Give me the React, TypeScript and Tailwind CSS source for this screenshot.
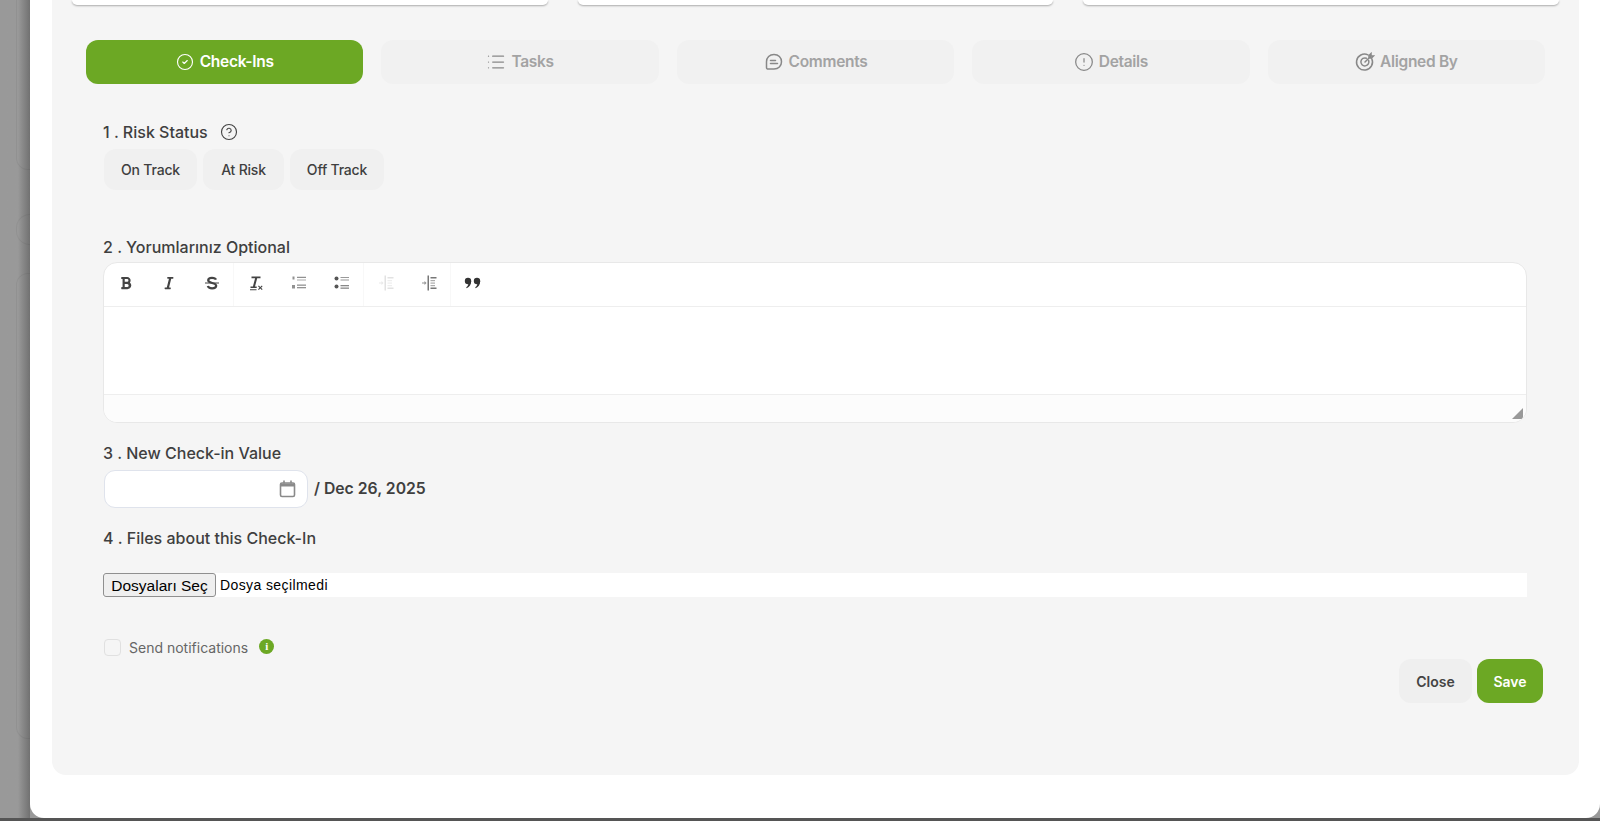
import React from "react";
import { CircleCheck, CircleAlert, CircleHelp, List } from "lucide-react";
import { FaBold, FaItalic } from "react-icons/fa";

const CommentIcon = () => (
  <svg width="20" height="20" viewBox="0 0 20 20" fill="none" stroke="currentColor" strokeWidth="1.5" strokeLinecap="round">
    <path d="M10 2.500c4.400 0 7.500 3 7.500 7.300s-3.100 7.300-7.500 7.300H4.200c-1 0-1.700-.7-1.700-1.700V9.800C2.500 5.500 5.600 2.500 10 2.500z" />
    <path d="M6.500 8.500h5M6.500 11.500h7" />
  </svg>
);

const TargetIcon = () => (
  <svg width="20" height="20" viewBox="0 0 20 20" fill="none" stroke="currentColor" strokeWidth="1.5" strokeLinecap="round">
    <path d="M16.800 6.800A8 8 0 1 1 13 2.900" />
    <path d="M13.600 8.400A4 4 0 1 1 11.400 6.200" />
    <path d="M10 10l6-6M14 3.600V6h2.400l2-2H16V1.600z" />
  </svg>
);

const StrikeIcon = () => (
  <svg width="16" height="16" viewBox="0 0 16 16" fill="none" stroke="currentColor">
    <path d="M12 4.600C11.500 3.300 10 2.800 8 2.800c-2.300 0-3.800.9-3.800 2.500 0 3.400 8 2 8 5.500 0 1.600-1.700 2.500-4.100 2.500-2.200 0-3.900-.8-4.300-2.300" strokeWidth="2.200" />
    <path d="M1 8h14" strokeWidth="1" />
  </svg>
);

const ClearFormat = () => (
  <svg width="16" height="16" viewBox="0 0 16 16" fill="currentColor">
    <path d="M3.500 1.500h9v1.800H9.200L7 11.500h1.700v1.500H2.500v-1.500h2.400L7.100 3.300H3.500z" />
    <path d="M2 14.200h6.500v1H2z" />
    <path d="M10 11.200l.8-.8 1.500 1.500 1.500-1.500.8.8-1.500 1.500 1.500 1.500-.8.8-1.500-1.500-1.500 1.500-.8-.8 1.500-1.500z" />
  </svg>
);

const OrderedIcon = () => (
  <svg width="16" height="16" viewBox="0 0 16 16" fill="currentColor">
    <rect x="1.500" y="1.500" width="2" height="3" opacity="0.8" />
    <rect x="1" y="10" width="3" height="3.500" opacity="0.8" />
    <rect x="6" y="1.800" width="9" height="1" />
    <rect x="6" y="4.500" width="9" height="1" opacity="0.6" />
    <rect x="6" y="9.500" width="9" height="1.300" opacity="0.8" />
    <rect x="6" y="12" width="9" height="1.300" opacity="0.8" />
  </svg>
);

const BulletIcon = () => (
  <svg width="16" height="16" viewBox="0 0 16 16" fill="currentColor">
    <circle cx="2.500" cy="3.500" r="2" />
    <circle cx="2.500" cy="11.500" r="2" />
    <rect x="6.500" y="2" width="8.500" height="1" opacity="0.6" />
    <rect x="6.500" y="4.500" width="8.500" height="1" opacity="0.6" />
    <rect x="6.500" y="10" width="8.500" height="1.300" opacity="0.7" />
    <rect x="6.500" y="12.500" width="8.500" height="1.300" opacity="0.7" />
  </svg>
);

const IndentIcon = () => (
  <svg width="16" height="16" viewBox="0 0 16 16" fill="currentColor">
    <rect x="6.500" y="0.500" width="1.500" height="15" />
    <path d="M1 7.500h2.500V6l2 2-2 2V8.500H1z" opacity="0.8" />
    <rect x="9.500" y="2" width="6" height="1.500" />
    <rect x="9.500" y="5" width="4.500" height="1.200" opacity="0.6" />
    <rect x="9.500" y="7.500" width="4.500" height="1.200" opacity="0.6" />
    <rect x="9.500" y="10" width="4.500" height="1.200" opacity="0.6" />
    <rect x="9.500" y="12.500" width="6" height="1.500" />
  </svg>
);

const QuoteIcon = () => (
  <svg width="17" height="14" viewBox="0 0 17 14" fill="currentColor">
    <circle cx="4" cy="5" r="3.200" />
    <path d="M7.200 5c0 3.500-1.700 6-4.500 7.200l-.5-.9C3.700 10.300 4.400 9 4.400 7z" />
    <circle cx="13" cy="5" r="3.200" />
    <path d="M16.200 5c0 3.500-1.700 6-4.500 7.200l-.5-.9c1.500-1 2.200-2.300 2.200-4.300z" />
  </svg>
);

const tabs = [
  { label: "Tasks", icon: <List size={20} strokeWidth={1.5} /> },
  { label: "Comments", icon: <CommentIcon /> },
  { label: "Details", icon: <CircleAlert size={20} strokeWidth={1.5} /> },
  { label: "Aligned By", icon: <TargetIcon /> },
];

const toolbarGroups = [
  [
    { key: "bold", icon: <FaBold size={14} />, cls: "text-[#444]" },
    { key: "italic", icon: <FaItalic size={14} />, cls: "text-[#444]" },
    { key: "strike", icon: <StrikeIcon />, cls: "text-[#444]" },
  ],
  [
    { key: "clear", icon: <ClearFormat />, cls: "text-[#444]" },
    { key: "ol", icon: <OrderedIcon />, cls: "text-[#777]" },
    { key: "ul", icon: <BulletIcon />, cls: "text-[#555]" },
  ],
  [
    { key: "outdent", icon: <IndentIcon />, cls: "text-[#e2e2e2]" },
    { key: "indent", icon: <IndentIcon />, cls: "text-[#777]" },
  ],
  [{ key: "quote", icon: <QuoteIcon />, cls: "text-[#333]" }],
];

export default function App() {
  return (
    <div className="h-[821px] overflow-hidden bg-[#555] font-['Inter',sans-serif] text-[#3f3f3f]">
      <div className="flex h-[818px] bg-[#999]">
        {/* Dimmed page behind the modal */}
        <div className="w-[30px] shrink-0 bg-gradient-to-r from-[#999999] from-60% to-[#717171] pl-[16px]">
          <div className="h-[170px] rounded-bl-[12px] border-b border-l border-black/5" />
          <div className="mt-[44px] h-[31px] rounded-l-[15px] border-y border-l border-black/5" />
          <div className="mt-[28px] h-[466px] rounded-l-[12px] border-y border-l border-black/5" />
        </div>

        <div className="flex-1 rounded-b-[14px] bg-white pb-[43px] pl-[22px] pr-[21px]">
          <div className="h-full rounded-b-[14px] bg-[#f5f5f5] px-[20px]">
            {/* Cards cut off at the top */}
            <div className="flex gap-[30px]">
              <div className="h-[5px] flex-1 rounded-b-[10px] bg-white shadow-[0_1px_2px_rgba(0,0,0,0.3)]" />
              <div className="h-[5px] flex-1 rounded-b-[10px] bg-white shadow-[0_1px_2px_rgba(0,0,0,0.3)]" />
              <div className="h-[5px] flex-1 rounded-b-[10px] bg-white shadow-[0_1px_2px_rgba(0,0,0,0.3)]" />
            </div>

            {/* Tabs */}
            <div className="mx-[14px] mt-[35px] flex gap-[18px]">
              <button className="flex h-[44px] flex-1 items-center justify-center gap-[6px] rounded-[12px] bg-[#6ca824] text-[15.5px] font-semibold tracking-[-0.3px] text-white">
                <CircleCheck size={18} strokeWidth={1.5} />
                Check-Ins
              </button>
              {tabs.map((t) => (
                <button
                  key={t.label}
                  className="flex h-[44px] flex-1 items-center justify-center gap-[5px] rounded-[12px] bg-[#f1f1f1] text-[15.5px] font-semibold tracking-[-0.3px] text-[#a3a3a3]"
                >
                  <span className="text-[#888]">{t.icon}</span>
                  {t.label}
                </button>
              ))}
            </div>

            <div className="ml-[31px] mr-[32px]">
              {/* 1 */}
              <div className="mt-[37px] flex h-[22px] items-center gap-[12px] text-[16px] font-medium">
                <span>1 . Risk Status</span>
                <CircleHelp size={18} strokeWidth={1.5} className="text-[#444]" />
              </div>
              <div className="ml-[1px] mt-[6px] flex gap-[6px] text-[14px] font-medium tracking-[-0.2px]">
                <button className="h-[41px] w-[93px] rounded-[12px] bg-[#f0f0f0]">On Track</button>
                <button className="h-[41px] w-[81px] rounded-[12px] bg-[#f0f0f0]">At Risk</button>
                <button className="h-[41px] w-[94px] rounded-[12px] bg-[#f0f0f0]">Off Track</button>
              </div>

              {/* 2 */}
              <div className="mt-[46px] h-[22px] text-[16px] font-medium leading-[22px]">2 . Yorumlarınız Optional</div>
              <div className="mt-[4px] overflow-hidden rounded-[14px] border border-[#e8e8e8] bg-white">
                <div className="flex h-[44px] items-center border-b border-[#eeeeee]">
                  {toolbarGroups.map((group, i) => (
                    <div key={i} className="flex h-full items-center border-r border-[#f8f8f8] pb-[3px] last:border-r-0">
                      {group.map((b) => (
                        <span key={b.key} className={"flex w-[43px] justify-center " + b.cls}>
                          {b.icon}
                        </span>
                      ))}
                    </div>
                  ))}
                </div>
                <div className="h-[87px]" />
                <div className="flex h-[28px] items-end justify-end border-t border-[#eeeeee] bg-[#fcfcfc] pb-[3px] pr-[3px]">
                  <div className="h-[11px] w-[11px] bg-[#999] [clip-path:polygon(100%_0,100%_100%,0_100%)]" />
                </div>
              </div>

              {/* 3 */}
              <div className="mt-[19px] h-[22px] text-[16px] font-medium leading-[22px]">3 . New Check-in Value</div>
              <div className="ml-[1px] mt-[6px] flex items-center gap-[6px]">
                <div className="flex h-[38px] w-[204px] items-center justify-end rounded-[11px] border border-[#dfe3ec] bg-white pr-[11px]">
                  <svg width="17" height="18" viewBox="0 0 17 18" fill="none" stroke="#8a8a8a" strokeWidth="1.6">
                    <rect x="1.500" y="3" width="14" height="13.500" rx="1.500" />
                    <path d="M1.500 5h14" strokeWidth="3" />
                    <path d="M5 .5v3M12 .5v3" />
                  </svg>
                </div>
                <span className="text-[15.75px] font-semibold">/ Dec 26, 2025</span>
              </div>

              {/* 4 */}
              <div className="mt-[19px] h-[22px] text-[16px] font-medium leading-[22px]">4 . Files about this Check-In</div>
              <div className="mt-[24px] flex h-[24px] items-center bg-white font-['Liberation_Sans',sans-serif] text-black">
                <button className="h-[24px] w-[113px] rounded-[3px] border border-[#8f8f8f] bg-[#efefef] text-[15.5px]">Dosyaları Seç</button>
                <span className="ml-[4px] text-[14px] tracking-[0.4px]">Dosya seçilmedi</span>
              </div>

              {/* Notifications */}
              <div className="ml-[1px] mt-[40px] flex items-center">
                <span className="h-[17px] w-[17px] rounded-[4px] border border-[#e0e0e0] bg-[#f5f5f5]" />
                <span className="ml-[8px] text-[14px] text-[#666]">Send notifications</span>
                <span className="mb-[2px] ml-[11px] flex h-[15px] w-[15px] items-center justify-center rounded-full bg-[#6ca824] font-['Liberation_Serif',serif] text-[11px] font-bold text-white">i</span>
              </div>

              {/* Actions */}
              <div className="-mr-[16px] mt-[1px] flex justify-end gap-[5px] text-[14px] font-semibold">
                <button className="h-[44px] w-[73px] rounded-[12px] bg-[#efefef] text-[#444]">Close</button>
                <button className="h-[44px] w-[66px] rounded-[12px] bg-[#6ca824] text-white">Save</button>
              </div>
            </div>
          </div>
        </div>
      </div>
    </div>
  );
}
